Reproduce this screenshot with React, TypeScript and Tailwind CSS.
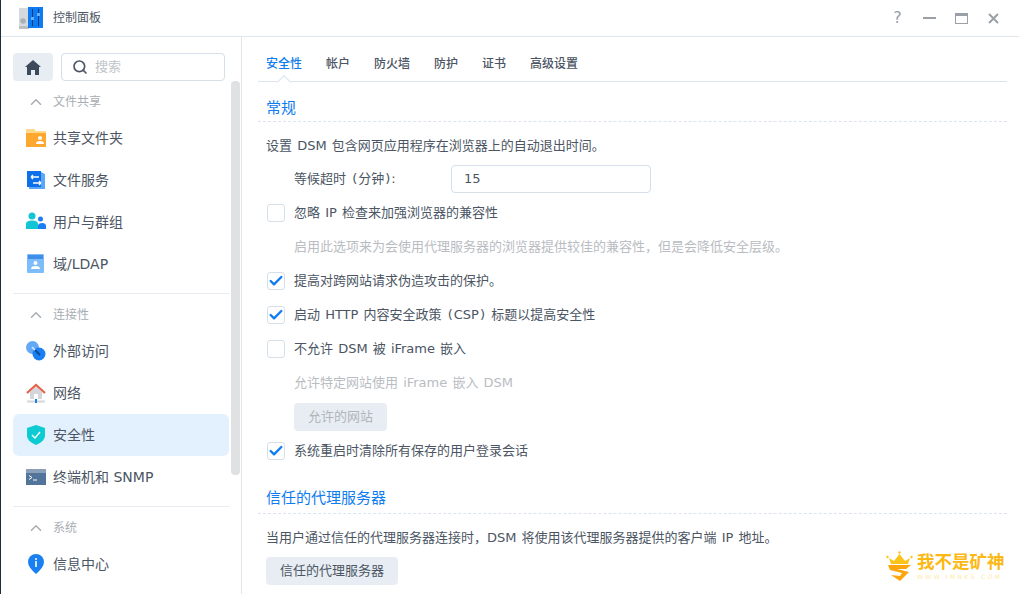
import React from 'react';
import { Check, ChevronUp, Search } from 'lucide-react';

const font = 'font-["DejaVu_Sans","Noto_Sans_CJK_SC",sans-serif]';

const AppIcon = () => (
  <svg width="24" height="23" viewBox="0 0 24 23">
    <rect x="0" y="1" width="10" height="21" fill="#d5d9dc" />
    <circle cx="4" cy="14" r="2.8" fill="#aab0b5" />
    <rect x="0" y="19" width="10" height="3" fill="#b9bec2" />
    <rect x="9" y="0" width="15" height="21" fill="#0f7bf2" />
    <rect x="13" y="2" width="1" height="17" fill="#0b3d7a" />
    <rect x="19" y="2" width="1" height="17" fill="#0b3d7a" />
    <rect x="12" y="10" width="3" height="3" fill="#66b0ff" />
    <rect x="18" y="6" width="3" height="3" fill="#66b0ff" />
  </svg>
);

const HomeIcon = () => (
  <svg width="16" height="15" viewBox="0 0 16 15">
    <path d="M8 0 L16 7 L14 7 L14 15 L10 15 L10 10 L6 10 L6 15 L2 15 L2 7 L0 7 Z" fill="#3d4a5c" />
  </svg>
);

const FolderIcon = () => (
  <svg width="20" height="20" viewBox="0 0 20 20">
    <path d="M0 1 H8 L10 3 H20 V6 H0 Z" fill="#fcd98b" />
    <rect x="0" y="5" width="20" height="14" fill="#fea82f" />
    <circle cx="14" cy="10" r="2" fill="#fff" />
    <path d="M10 16 Q10 13 14 13 Q18 13 18 16 Z" fill="#fff" />
  </svg>
);

const FileSvcIcon = () => (
  <svg width="20" height="20" viewBox="0 0 20 20">
    <path d="M3 1 H13 L19 4 V19 H3 Z" fill="#5aa6f8" />
    <path d="M1 1 H15 V17 H1 Z" fill="#0f6fe8" />
    <path d="M5 7 H13 M5 7 L7 5 M5 7 L7 9 M15 13 H7 M15 13 L13 11 M15 13 L13 15" stroke="#fff" strokeWidth="1.3" fill="none" />
  </svg>
);

const UsersIcon = () => (
  <svg width="20" height="20" viewBox="0 0 20 20">
    <circle cx="6" cy="4" r="3.5" fill="#12c4d4" />
    <path d="M0 17 V12 Q0 8.5 6 8.5 Q12 8.5 12 12 V17 Z" fill="#12c4d4" />
    <circle cx="14.5" cy="7" r="2.5" fill="#1a7ff0" />
    <path d="M12 17 V13 Q13 11 16 11 Q20 11 20 14 V17 Z" fill="#1a7ff0" />
  </svg>
);

const DomainIcon = () => (
  <svg width="18" height="20" viewBox="0 0 18 20">
    <rect x="0" y="0" width="17" height="19" rx="1" fill="#7fbcfa" />
    <rect x="1" y="1" width="15" height="4" fill="#3f8fea" />
    <circle cx="8.5" cy="9" r="2" fill="#fff" />
    <path d="M4 15 Q4 12 8.5 12 Q13 12 13 15 Z" fill="#fff" />
  </svg>
);

const ExternalIcon = () => (
  <svg width="20" height="20" viewBox="0 0 20 20">
    <circle cx="6.5" cy="6.5" r="6.5" fill="#63a9f5" />
    <circle cx="13" cy="13" r="6.5" fill="#1a7ff0" />
    <path d="M9 9 L14 14" stroke="#0d4c9c" strokeWidth="2" />
    <path d="M6 6 L9 9" stroke="#d6e9ff" strokeWidth="1.5" />
  </svg>
);

const NetworkIcon = () => (
  <svg width="20" height="20" viewBox="0 0 20 20">
    <path d="M4 9 L10 4 L16 9 V16 H4 Z" fill="#d3d6da" />
    <path d="M1 10 L10 2 L19 10" stroke="#e4614a" strokeWidth="2.2" fill="none" />
    <rect x="8" y="11" width="4" height="5" fill="#fff" />
    <rect x="1" y="17.5" width="18" height="2" fill="#d3d6da" />
    <rect x="9" y="16" width="2" height="4" fill="#1a7ff0" />
  </svg>
);

const ShieldIcon = () => (
  <svg width="18" height="20" viewBox="0 0 18 20">
    <path d="M9 0 L18 3 V11 Q18 16 9 20 Q0 16 0 11 V3 Z" fill="#0dcbd2" />
    <path d="M5 10 L8 13 L13 7" stroke="#fff" strokeWidth="1.4" fill="none" />
  </svg>
);

const TerminalIcon = () => (
  <svg width="20" height="16" viewBox="0 0 20 16">
    <rect width="20" height="16" fill="#52739a" />
    <rect width="20" height="4" fill="#8ba0b8" />
    <path d="M3 6.5 L6 8.5 L3 10.5 M7 11 H11" stroke="#fff" strokeWidth="1" fill="none" />
  </svg>
);

const InfoIcon = () => (
  <svg width="18" height="20" viewBox="0 0 18 20">
    <path d="M9 0 A8 8 0 0 1 17 8 Q17 13 9 20 Q1 13 1 8 A8 8 0 0 1 9 0 Z" fill="#1a7ff0" />
    <circle cx="9" cy="5" r="1" fill="#fff" />
    <rect x="8.2" y="7" width="1.6" height="6" fill="#fff" />
  </svg>
);

const Crown = () => (
  <svg width="27" height="31" viewBox="0 0 27 31">
    <circle cx="13.5" cy="1.5" r="1.2" fill="#fcc419" />
    <circle cx="1.5" cy="6" r="1.2" fill="#fcc419" />
    <circle cx="25.5" cy="6" r="1.2" fill="#fcc419" />
    <path d="M3 7 L8 10 L13.5 3 L19 10 L24 7 L22 13 H5 Z" fill="#fcc419" />
    <path d="M2 14 H25 L20 18 H11 L23 21 L14 30 L5 24 L14 25 L16 22 L4 19 Z" fill="#fda50f" />
  </svg>
);

const NavItem = ({ icon, label, active }: { icon: React.ReactNode; label: string; active?: boolean }) => (
  <div className={`h-[42px] flex items-center rounded-md ${active ? 'bg-[#e3f0fd]' : ''}`}>
    <div className="w-10 pl-[6px] flex justify-center shrink-0">{icon}</div>
    <span className="text-sm text-[#4b5563]">{label}</span>
  </div>
);

const Group = ({ label }: { label: string }) => (
  <div className="h-[42px] flex items-center">
    <div className="w-10 pl-[6px] flex justify-center shrink-0">
      <ChevronUp size={18} className="text-[#a8adb3]" />
    </div>
    <span className="text-xs text-[#a8adb3]">{label}</span>
  </div>
);

const CheckRow = ({ label, checked }: { label: React.ReactNode; checked?: boolean }) => (
  <div className="h-[34px] flex items-center pl-[9px]">
    <div className="w-[18px] h-[18px] rounded-[3px] border border-[#d5dfe9] bg-white flex items-center justify-center shrink-0">
      {checked && <Check size={16} strokeWidth={3.5} className="text-[#0f7cf0]" />}
    </div>
    <span className="ml-[9px] text-[13px] text-[#4b5563]">{label}</span>
  </div>
);

const Paren = ({ c }: { c: string }) => <span className="mx-px">{c}</span>;

const tabs = ['安全性', '帐户', '防火墙', '防护', '证书', '高级设置'];

export default function App() {
  return (
    <div className={`w-[1019px] h-[594px] overflow-hidden bg-white flex flex-col border-l border-[#1f2d3d] ${font}`}>
      {/* title bar */}
      <div className="h-[37px] shrink-0 flex items-center border-b border-[#dfe6ec] pl-[18px] pr-[19px]">
        <AppIcon />
        <span className="ml-[10px] text-xs text-[#4b5563]">控制面板</span>
        <div className="ml-auto flex items-center gap-[19px] text-[#9aa0a6]">
          <span className="w-[13px] text-center text-base leading-none">?</span>
          <div className="w-[13px] h-[2px] bg-[#9aa0a6]" />
          <div className="w-[13px] h-[11px] border border-[#9aa0a6] border-t-[3px]" />
          <svg width="13" height="13" viewBox="0 0 13 13">
            <path d="M2 2 L11 11 M11 2 L2 11" stroke="#9aa0a6" strokeWidth="2" />
          </svg>
        </div>
      </div>

      <div className="flex-1 flex min-h-0">
        {/* sidebar */}
        <div className="relative w-[241px] shrink-0 border-r border-[#dfe6ec] overflow-hidden pl-3 pr-[11px]">
          <div className="flex gap-2 pt-4">
            <div className="w-10 h-7 bg-[#e8edf3] rounded flex items-center justify-center">
              <HomeIcon />
            </div>
            <div className="w-[164px] h-7 border border-[#d5dfe9] rounded flex items-center pl-[10px]">
              <Search size={16} strokeWidth={2.5} className="text-[#4b5563]" />
              <span className="ml-[7px] text-[13px] text-[#c0c4c8]">搜索</span>
            </div>
          </div>
          <div className="w-[216px]">
            <Group label="文件共享" />
            <div className="-mt-[6px]" />
            <NavItem icon={<FolderIcon />} label="共享文件夹" />
            <NavItem icon={<FileSvcIcon />} label="文件服务" />
            <NavItem icon={<UsersIcon />} label="用户与群组" />
            <NavItem icon={<DomainIcon />} label="域/LDAP" />
            <div className="mt-2 border-t border-[#e8ecf0]" />
            <Group label="连接性" />
            <div className="-mt-[6px]" />
            <NavItem icon={<ExternalIcon />} label="外部访问" />
            <NavItem icon={<NetworkIcon />} label="网络" />
            <NavItem icon={<ShieldIcon />} label="安全性" active />
            <NavItem icon={<TerminalIcon />} label="终端机和 SNMP" />
            <div className="mt-2 border-t border-[#e8ecf0]" />
            <Group label="系统" />
            <div className="-mt-[6px]" />
            <NavItem icon={<InfoIcon />} label="信息中心" />
          </div>
          {/* scrollbar */}
          <div className="absolute left-[230px] top-[44px] w-[9px] h-[394px] rounded bg-[#dfe1e3]" />
        </div>

        {/* content */}
        <div className="relative flex-1 min-w-0 pl-4 pr-3 overflow-hidden [word-spacing:1px]">
          <div className="relative h-[45px] pt-[10px] flex items-center border-b border-[#dbe4ec] pl-2 gap-6">
            {tabs.map((t, i) => (
              <span key={t} className={`text-xs font-medium ${i === 0 ? 'text-[#0f7cf0]' : 'text-[#4b5563]'}`}>{t}</span>
            ))}
            <div className="absolute left-[21px] -bottom-[1px] w-[10px] h-[10px] translate-y-1/2 rotate-45 bg-white border-l border-t border-[#dbe4ec]" />
          </div>
          <div className="h-[40px] pl-2 pt-[14px] flex items-center border-b border-dashed border-[#dbe4ec] text-[15px] text-[#0f7cf0]">常规</div>
          <div className="h-[44px] pl-2 pt-1 flex items-center text-[13px] text-[#4b5563]">设置 DSM 包含网页应用程序在浏览器上的自动退出时间。</div>
          <div className="h-7 flex items-center pl-9 -mt-[1px]">
            <span className="w-[157px] text-[13px] text-[#4b5563]">等候超时 <Paren c="(" />分钟<Paren c=")" />:</span>
            <div className="w-[200px] h-7 border border-[#d5dfe9] rounded flex items-center pl-3 text-[13px] text-[#4b5563]">15</div>
          </div>
          <div className="mt-[3px]">
            <CheckRow label="忽略 IP 检查来加强浏览器的兼容性" />
            <div className="h-[34px] flex items-center pl-9 text-[13px] text-[#b9bdc2]">启用此选项来为会使用代理服务器的浏览器提供较佳的兼容性，但是会降低安全层级。</div>
            <CheckRow label="提高对跨网站请求伪造攻击的保护。" checked />
            <CheckRow label={<>启动 HTTP 内容安全政策 <Paren c="(" />CSP<Paren c=")" /> 标题以提高安全性</>} checked />
            <CheckRow label="不允许 DSM 被 iFrame 嵌入" />
            <div className="h-[34px] flex items-center pl-9 text-[13px] text-[#b9bdc2]">允许特定网站使用 iFrame 嵌入 DSM</div>
            <div className="pl-9 py-[3px]">
              <div className="w-[93px] h-7 rounded bg-[#e8edf3] flex items-center justify-center text-[13px] text-[#b0b5ba]">允许的网站</div>
            </div>
            <CheckRow label="系统重启时清除所有保存的用户登录会话" checked />
          </div>
          <div className="h-[46px] pl-2 pt-[15px] flex items-center border-b border-dashed border-[#dbe4ec] text-[15px] text-[#0f7cf0]">信任的代理服务器</div>
          <div className="h-[44px] pl-2 pt-1 flex items-center text-[13px] text-[#4b5563]">当用户通过信任的代理服务器连接时，DSM 将使用该代理服务器提供的客户端 IP 地址。</div>
          <div className="pl-2 -mt-[1px]">
            <div className="w-[132px] h-7 rounded bg-[#e8edf3] flex items-center justify-center text-[13px] text-[#4b5563]">信任的代理服务器</div>
          </div>
          {/* watermark */}
          <div className="absolute left-[644px] top-[514px] flex items-center gap-[4px]">
            <Crown />
            <div className="flex flex-col">
              <span className="text-[17.5px] leading-[20px] font-bold text-[#fcb814]">我不是矿神</span>
              <span className="text-[6px] leading-[10px] tracking-[2.4px] text-[#fde9a8]">WWW.IMNKS.COM</span>
            </div>
          </div>
        </div>
      </div>
    </div>
  );
}
